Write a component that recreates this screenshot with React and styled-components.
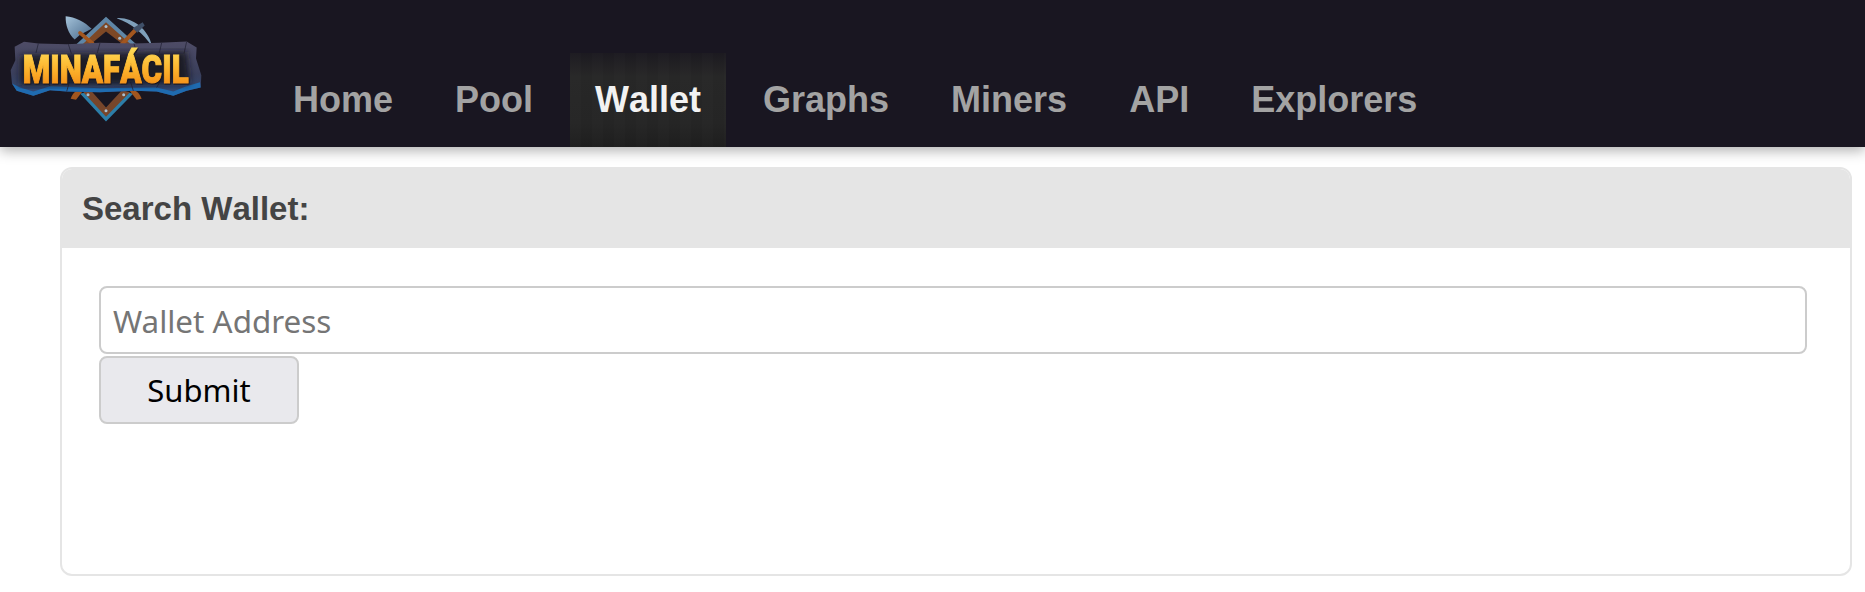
import React from "react"
import styled, { createGlobalStyle } from "styled-components"

const links = ["Home", "Pool", "Wallet", "Graphs", "Miners", "API", "Explorers"]

function Logo() {
    return (
        <LogoSvg viewBox="30 45 576 320" aria-label="MinaFácil">
            <defs>
                <linearGradient id="gold" x1="0" y1="0" x2="0" y2="1">
                    <stop offset="0" stopColor="#ffe05c" />
                    <stop offset="0.5" stopColor="#fdb32c" />
                    <stop offset="1" stopColor="#f0800f" />
                </linearGradient>
                <linearGradient id="stone" x1="0" y1="0" x2="0" y2="1">
                    <stop offset="0" stopColor="#4e4c66" />
                    <stop offset="0.6" stopColor="#3a3f5c" />
                    <stop offset="1" stopColor="#2f4a78" />
                </linearGradient>
                <linearGradient id="blade" x1="0" y1="0" x2="1" y2="1">
                    <stop offset="0" stopColor="#a5c3da" />
                    <stop offset="1" stopColor="#47688a" />
                </linearGradient>
                <filter id="soft"><feGaussianBlur stdDeviation="9" /></filter>
            </defs>

            {/* top chevron */}
            <path d="M226 135 L318 50 L412 135 L378 135 L318 84 L262 135 Z" fill="#5f86a6" />
            <path d="M248 132 L318 66 L392 132 L368 132 L318 94 L272 132 Z" fill="#7d4826" />
            <circle cx="318" cy="79" r="4.5" fill="#a9c0d2" />
            <circle cx="262" cy="114" r="4.5" fill="#a9c0d2" />
            <circle cx="359" cy="114" r="4.5" fill="#a9c0d2" />

            {/* shovel */}
            <path d="M197 48 C225 50 255 65 275 86 L240 104 L224 118 C205 100 196 75 197 48 Z" fill="url(#blade)" />
            <path d="M240 98 L278 130" stroke="#a2561f" strokeWidth="11" strokeLinecap="round" />

            {/* pickaxe */}
            <path d="M350 54 C395 50 445 85 456 138 C430 100 395 70 350 54 Z" fill="#7fa0bb" />
            <path d="M408 88 L366 132" stroke="#a2561f" strokeWidth="12" strokeLinecap="round" />
            <path d="M398 84 L428 66 L434 76 L412 98 Z" fill="#3f4f68" />

            {/* bottom chevron */}
            <path d="M240 280 L318 364 L400 280 L372 276 L318 332 L268 276 Z" fill="#2c7ea9" />
            <path d="M250 276 L318 350 L390 276 L366 270 L318 322 L272 270 Z" fill="#77462b" />
            <path d="M212 296 C218 274 235 266 252 268 L228 299 Z" fill="#a2561f" />
            <path d="M425 296 C418 274 402 266 386 268 L410 299 Z" fill="#a2561f" />
            <circle cx="318" cy="332" r="4.5" fill="#a9c0d2" />
            <circle cx="264" cy="284" r="4.5" fill="#a9c0d2" />
            <circle cx="371" cy="284" r="4.5" fill="#a9c0d2" />

            {/* stone banner */}
            <path
                d="M36 250 L32 210 L46 180 L44 140 L72 125 L115 130 L200 132 L300 128 L400 130 L480 128 L560 124 L590 142 L588 175 L604 225 L602 262 L560 272 L520 287 L470 274 L400 272 L300 276 L200 274 L150 270 L100 287 L50 272 Z"
                fill="url(#stone)"
            />
            <path
                d="M36 250 L50 272 L100 287 L150 270 L200 274 L300 276 L400 272 L470 274 L520 287 L560 272 L602 262 L600 246 L555 260 L520 274 L470 262 L300 264 L150 258 L100 274 L60 262 Z"
                fill="#1f6bb0"
            />
            <StoneCrack d="M115 130 L108 158 M205 132 L214 160 M300 128 L292 158 M402 130 L410 158 M485 128 L478 158 M560 124 L552 160 M200 274 L208 246 M400 272 L392 246 M150 258 L140 240 M470 262 L480 244" />
            <path d="M62 165 L560 155 L570 250 L60 255 Z" fill="#15121c" opacity="0.85" filter="url(#soft)" />
            <LogoText x="68" y="248" textLength="498" lengthAdjust="spacingAndGlyphs">MINAFÁCIL</LogoText>
        </LogoSvg>
    )
}

export default function App() {
    return (
        <>
            <GlobalStyle />
            <Header>
                <Logo />
                <Nav>
                    {links.map((l) => <NavLink key={l} href="#" active={l === "Wallet" ? 1 : 0}>{l}</NavLink>)}
                </Nav>
            </Header>
            <Main>
                <Panel>
                    <PanelTitle>Search Wallet:</PanelTitle>
                    <PanelBody>
                        <AddressInput type="text" placeholder="Wallet Address" />
                        <SubmitButton type="button">Submit</SubmitButton>
                    </PanelBody>
                </Panel>
            </Main>
        </>
    )
}

const GlobalStyle = createGlobalStyle`
body{
    margin: 0;
    background: #fff;
    font-family: "Liberation Sans", Arial, sans-serif;
    font-kerning: none;
}
`

const Header = styled.header`
display: flex;
align-items: flex-end;
height: 147px;
background: #191621;
box-shadow: 0 4px 12px rgba(0,0,0,.3);
`

const LogoSvg = styled.svg`
width: 192px;
height: 107px;
flex-shrink: 0;
align-self: flex-start;
overflow: visible;
margin: 15px 66px 0 10px;
`

const StoneCrack = styled.path`
fill: none;
stroke: #26263a;
stroke-width: 2.5px;
`

const LogoText = styled.text`
font-family: Roboto, "Liberation Sans", sans-serif;
font-weight: 900;
font-size: 119px;
fill: url(#gold);
stroke: url(#gold);
stroke-width: 3px;
filter: drop-shadow(2px 3px 0 #17131f);
`

const Nav = styled.nav`
display: flex;
gap: 12px;
`

const NavLink = styled.a`
display: flex;
align-items: center;
height: 94px;
padding: 0 25px;
font-size: 36px;
font-weight: 700;
text-decoration: none;
color: ${props => props.active ? "#f2f2f2" : "#a3a3a3"};
background: ${props => props.active
    ? "repeating-linear-gradient(90deg, rgba(255,255,255,.006) 0 11px, rgba(0,0,0,.012) 11px 22px), linear-gradient(#1c1a20, #272727 25%, #252525 75%, #1e1e1e)"
    : "none"};
`

const Main = styled.main`
padding: 20px 13px 15px 60px;
`

const Panel = styled.section`
height: 409px;
box-sizing: border-box;
border: 2px solid #e5e5e5;
border-radius: 12px;
overflow: hidden;
`

const PanelTitle = styled.h2`
display: flex;
align-items: center;
height: 79px;
margin: 0;
padding-left: 20px;
background: #e5e5e5;
font-size: 33px;
font-weight: 700;
color: #444;
`

const PanelBody = styled.div`
display: flex;
flex-direction: column;
align-items: flex-start;
gap: 2px;
padding: 38px 43px 0 37px;
`

const AddressInput = styled.input`
width: 100%;
height: 68px;
box-sizing: border-box;
padding: 0 12px;
border: 2px solid #ccc;
border-radius: 8px;
outline: none;
font-family: "Noto Sans", sans-serif;
font-size: 31.4px;
&::placeholder{
    color: #757575;
    opacity: 1;
}
`

const SubmitButton = styled.button`
width: 200px;
height: 68px;
border: 2px solid #ccc;
border-radius: 8px;
background: #e9e9ed;
color: #000;
font-family: "Noto Sans", sans-serif;
font-size: 31px;
`
